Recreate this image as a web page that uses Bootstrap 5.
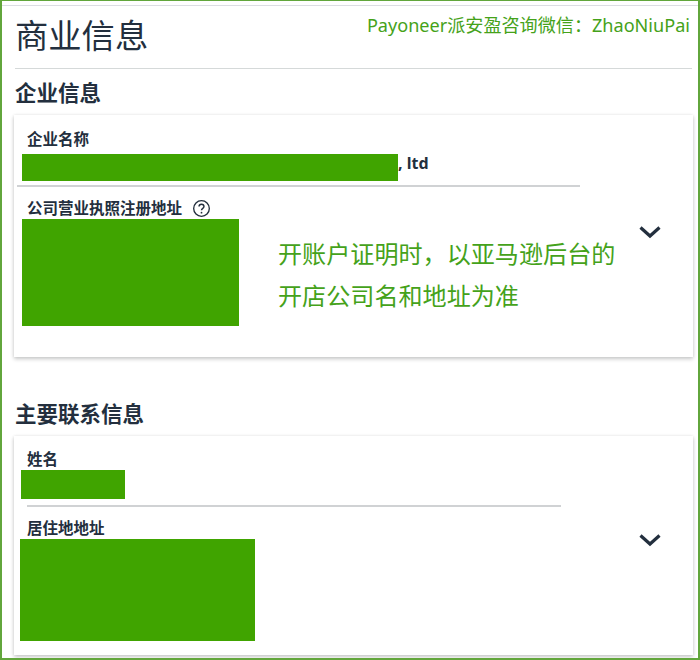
<!DOCTYPE html>
<html lang="zh-CN">
<head>
  <meta charset="utf-8">
  <title>商业信息</title>
  <meta name="viewport" content="width=device-width, initial-scale=1">
  <link href="https://cdn.jsdelivr.net/npm/bootstrap@5.3.0/dist/css/bootstrap.min.css" rel="stylesheet">
  <style>
    html, body { height: 100%; }
    body {
      font-family: "Noto Sans", "Noto Sans CJK SC", sans-serif;
      color: #232f3e;
      background: #fff;
    }
    .page-frame {
      width: 700px;
      height: 660px;
      overflow: hidden;
      border: 2px solid #62a63c;
      border-width: 1px 2px 2px 2px;
      padding-top: 4px;
    }
    .top-line { border-top: 1px solid #dcdde3; }
    .page-head {
      height: 63px;
      margin: 0 6px 0 13px;
      border-bottom: 1px solid #d5d9d9;
    }
    .page-title {
      font-size: 33.3px;
      font-weight: 400;
      line-height: 40px;
      margin: 9px 0 0 0;
    }
    .promo-text {
      font-size: 18.1px;
      line-height: 24px;
      color: #45a21a;
      margin: 7px 2px 0 0;
    }
    .sect-title {
      font-size: 21.500px;
      font-weight: 700;
      line-height: 28px;
      margin: 0 0 0 13px;
    }
    .sect-one { margin-top: 10px; }
    .sect-two { margin-top: 43px; }
    .info-box {
      margin: 0 5px 0 12px;
      background: #fff;
      box-shadow: 0 2px 4px rgba(15, 17, 17, .22), 0 0 3px rgba(15, 17, 17, .08);
    }
    .box-one { height: 242px; margin-top: 8px; padding-top: 14px; }
    .box-two { height: 219px; margin-top: 8px; padding-top: 13px; }
    .field-label {
      font-size: 15.500px;
      font-weight: 700;
      line-height: 20px;
      margin: 0 0 0 13px;
    }
    .label-licence { margin-top: 11px; margin-bottom: 1px; }
    .label-home { margin-top: 11px; margin-bottom: 1px; }
    .mask-block { background: #40a400; flex: none; }
    .company-mask { width: 376px; height: 27px; margin-left: 8px; }
    .address-mask { width: 217px; height: 107px; margin-left: 8px; }
    .name-mask { width: 104px; height: 29px; margin: 1px 0 0 7px; }
    .home-mask { width: 235px; height: 102px; margin-left: 6px; }
    .company-row { margin-top: 5px; }
    .company-tail { font-size: 16px; font-weight: 700; line-height: 18px; margin-top: 0; }
    .line-one { width: 563px; margin: 4px 0 0 3px; border-top: 2px solid #d0d2d4; }
    .line-two { width: 534px; margin: 6px 0 0 13px; border-top: 2px solid #d0d2d4; }
    .help-mark { margin-left: 10px; }
    .note-text {
      font-size: 24.1px;
      line-height: 42px;
      color: #45a21a;
      margin: 14px 0 0 39px;
    }
    .fold-mark { margin-right: 32px; flex: none; }
    .box-one .fold-mark { margin-top: 96px; }
    .box-two .fold-mark { margin-top: 84px; }
  </style>
</head>
<body>
  <div class="page-frame">
    <div class="top-line"></div>
    <div class="page-head d-flex justify-content-between align-items-start">
      <h1 class="page-title">商业信息</h1>
      <div class="promo-text">Payoneer派安盈咨询微信：ZhaoNiuPai</div>
    </div>

    <!-- 企业信息 -->
    <h2 class="sect-title sect-one">企业信息</h2>
    <div class="info-box box-one d-flex justify-content-between align-items-start">
      <div class="flex-grow-1">
        <div class="field-label">企业名称</div>
        <div class="company-row d-flex">
          <div class="mask-block company-mask"></div>
          <div class="company-tail">, ltd</div>
        </div>
        <div class="line-one"></div>
        <div class="field-label label-licence d-flex align-items-center">
          公司营业执照注册地址
          <svg class="help-mark" width="19" height="19" viewBox="0 0 17 17" fill="none" stroke="#232f3e">
            <circle cx="8.5" cy="8.5" r="7" stroke-width="1.2"/>
            <path d="M6.3 6.8c0-1.3 1-2.1 2.2-2.1s2.2.8 2.2 2c0 1.7-2.2 1.7-2.2 3.4" stroke-width="1.3"/>
            <circle cx="8.5" cy="12.2" r=".8" fill="#232f3e" stroke="none"/>
          </svg>
        </div>
        <div class="d-flex">
          <div class="mask-block address-mask"></div>
          <div class="note-text">开账户证明时，以亚马逊后台的<br>开店公司名和地址为准</div>
        </div>
      </div>
      <svg class="fold-mark" width="22" height="14" viewBox="0 0 22 14" fill="none" stroke="#232f3e" stroke-width="3.2">
        <path d="M1.500 2.500l9.500 8.500 9.500-8.500"/>
      </svg>
    </div>

    <!-- 主要联系信息 -->
    <h2 class="sect-title sect-two">主要联系信息</h2>
    <div class="info-box box-two d-flex justify-content-between align-items-start">
      <div class="flex-grow-1">
        <div class="field-label">姓名</div>
        <div class="mask-block name-mask"></div>
        <div class="line-two"></div>
        <div class="field-label label-home">居住地地址</div>
        <div class="mask-block home-mask"></div>
      </div>
      <svg class="fold-mark" width="22" height="14" viewBox="0 0 22 14" fill="none" stroke="#232f3e" stroke-width="3.2">
        <path d="M1.500 2.500l9.500 8.500 9.500-8.500"/>
      </svg>
    </div>
  </div>
  <script src="https://cdn.jsdelivr.net/npm/bootstrap@5.3.0/dist/js/bootstrap.bundle.min.js"></script>
</body>
</html>
